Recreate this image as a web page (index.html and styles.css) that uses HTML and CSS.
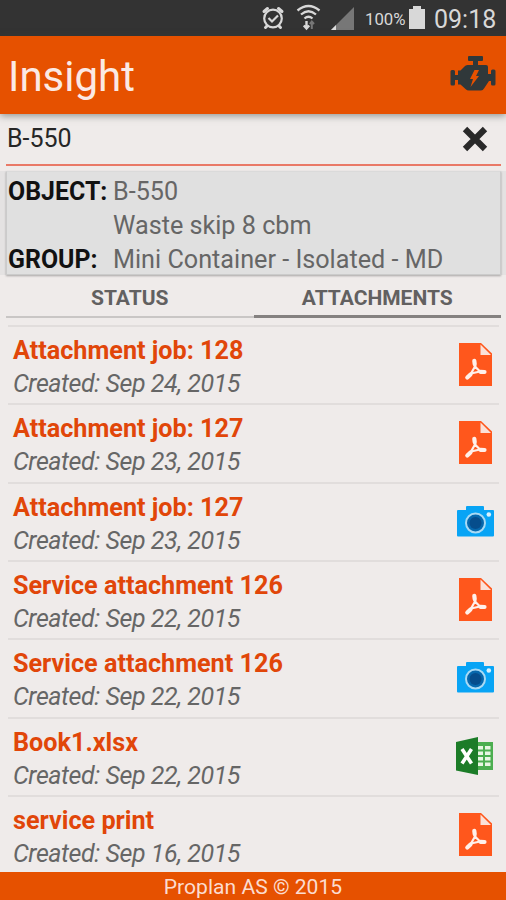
FILE: index.html
```html
<!DOCTYPE html>
<html lang="en">
<head>
<meta charset="utf-8">
<title>Insight</title>
<link rel="stylesheet" href="styles.css">
</head>
<body>
<svg class="defs" width="0" height="0" aria-hidden="true">
  <symbol id="pdf" viewBox="0 0 33 43">
    <path fill="#ff571c" d="M0 0H22L33 10.500V43H0Z"/>
    <path fill="#fbe1d8" d="M21.500 1.500V12H32Z"/>
    <path fill="none" stroke="#fff0ea" stroke-width="2.200" stroke-linejoin="round" d="M15.700 20L15.700 24L12 30.500L21 28.500L16.500 24Z"/>
    <path fill="none" stroke="#fff0ea" stroke-width="4.200" stroke-linecap="round" d="M15.300 17.800L15.700 21M11.500 31.500L8.300 34.500M21.500 28.800L25.500 29"/>
  </symbol>
  <symbol id="camera" viewBox="0 0 37 32">
    <path fill="#08a4f5" d="M1 5H9V2Q9 1 10 1H26Q27 1 27 2V5H36Q37 5 37 6V30.500Q37 31.500 36 31.500H1Q0 31.500 0 30.500V6Q0 5 1 5Z"/>
    <circle cx="18.500" cy="18" r="9.500" fill="#0768ad" stroke="#a9daf4" stroke-width="2"/>
    <circle cx="18.500" cy="18" r="6" fill="#064d8c"/>
    <circle cx="31.800" cy="9.500" r="2.300" fill="#d9f2fd"/>
  </symbol>
  <symbol id="excel" viewBox="0 0 38 38">
    <path fill="#4cae50" d="M21 5H37V33H21Z"/>
    <path stroke="#e8f5e3" stroke-width="3.600" d="M22 10.800H27M29 10.800H34.500M22 16.300H27M29 16.300H34.500M22 21.800H27M29 21.800H34.500M22 27.300H27M29 27.300H34.500"/>
    <path fill="#1c7c28" d="M0 5L22 0V38L0 33.500Z"/>
    <path stroke="#fff" stroke-width="3.600" d="M6 12L15.500 26.500M15.500 12L6 26.500"/>
  </symbol>
</svg>
<div class="screen">
  <div class="status">
    <svg class="status-icons" width="104" height="36" viewBox="0 0 104 36">
      <g fill="none" stroke="#d8d8d8">
        <circle cx="23" cy="18.500" r="8.800" stroke-width="2.200"/>
        <path stroke-width="2.200" d="M18.500 18L22 21.500L28 15.500"/>
        <path stroke-width="3" stroke-linecap="round" d="M14 11.500L17.500 8.500M28.500 8.500L32 11.500M17 26L15.500 27.500M29 26L30.500 27.500"/>
        <path stroke-width="2.300" d="M47.500 10.500Q58.500 1.500 69.500 10.500M51 14.500Q58.500 8 66 14.500M54.500 18.500Q58.500 15 62.500 18.500"/>
        <path stroke-width="2.400" d="M56.500 21V28M53.800 25.500L56.500 28.500L59.200 25.500"/>
        <path stroke="#777" stroke-width="2" d="M61.800 29V22M59.800 24L61.800 21.500L64 24"/>
      </g>
      <path fill="#777" d="M81 30L104 7V30Z"/>
      <path fill="#ddd" d="M81 30L86 25V30Z"/>
    </svg>
    <span class="percent">100%</span>
    <svg class="battery" width="17" height="24" viewBox="0 0 17 24"><path fill="#d8d8d8" d="M0 3H4V0H12V3H16V23H0Z"/></svg>
    <span class="clock">09:18</span>
  </div>
  <header class="bar">
    <h1 class="title">Insight</h1>
    <svg class="engine" width="46" height="36" viewBox="0 0 46 36">
      <path fill="#30383a" d="M19 0H32Q33 0 33 1V4Q33 5 32 5H28V9H36Q38 9 38 11V18H41V15Q41 13.500 42.500 13.500H44Q45.500 13.500 45.500 15V28Q45.500 29.500 44 29.500H42.500Q41 29.500 41 28V25H39L34 32.500Q33 34.500 31 34.500H19Q17 34.500 15.500 33L10.500 28.500H8V24H5V28Q5 29.500 3.500 29.500H2Q.5 29.500 .5 28V15.500Q.5 14 2 14H3.500Q5 14 5 15.500V19H8V14.500H10.500L14.500 10.500Q15.500 9 17.500 9H23V5H19Q18 5 18 4V1Q18 0 19 0Z"/>
      <path fill="#e65100" d="M24.500 14H29L26 20H29L20.500 31L23 23H20Z"/>
    </svg>
  </header>
  <div class="search">
    <span class="query">B-550</span>
    <svg class="clear" width="26" height="26" viewBox="0 0 26 26"><path stroke="#292929" stroke-width="6.200" stroke-linejoin="round" d="M3 3L23 23M23 3L3 23"/></svg>
  </div>
  <div class="band">
    <dl class="card">
      <dt class="label">OBJECT:</dt><dd class="value">B-550</dd>
      <dt class="label"></dt><dd class="value">Waste skip 8 cbm</dd>
      <dt class="label">GROUP:</dt><dd class="value">Mini Container - Isolated - MD</dd>
    </dl>
  </div>
  <nav class="tabs">
    <div class="tab">STATUS</div>
    <div class="tab active">ATTACHMENTS</div>
  </nav>
  <main class="list">
    <div class="row"><div class="text"><div class="name">Attachment job: 128</div><div class="date">Created: Sep 24, 2015</div></div><svg class="pdf"><use href="#pdf"/></svg></div>
    <div class="row"><div class="text"><div class="name">Attachment job: 127</div><div class="date">Created: Sep 23, 2015</div></div><svg class="pdf"><use href="#pdf"/></svg></div>
    <div class="row"><div class="text"><div class="name">Attachment job: 127</div><div class="date">Created: Sep 23, 2015</div></div><svg class="camera"><use href="#camera"/></svg></div>
    <div class="row"><div class="text"><div class="name">Service attachment 126</div><div class="date">Created: Sep 22, 2015</div></div><svg class="pdf"><use href="#pdf"/></svg></div>
    <div class="row"><div class="text"><div class="name">Service attachment 126</div><div class="date">Created: Sep 22, 2015</div></div><svg class="camera"><use href="#camera"/></svg></div>
    <div class="row"><div class="text"><div class="name">Book1.xlsx</div><div class="date">Created: Sep 22, 2015</div></div><svg class="excel"><use href="#excel"/></svg></div>
    <div class="row"><div class="text"><div class="name">service print</div><div class="date">Created: Sep 16, 2015</div></div><svg class="pdf"><use href="#pdf"/></svg></div>
  </main>
  <footer class="footer">Proplan AS © 2015</footer>
</div>
</body>
</html>
```

FILE: styles.css
```css
* { box-sizing: border-box; }
body { margin: 0; font-family: Roboto, "Liberation Sans", sans-serif; background: #efebea; }
.defs { display: block; height: 0; }
.screen { width: 506px; height: 900px; display: flex; flex-direction: column; overflow: hidden; }
.status { height: 36px; flex: none; background: #333; color: #d8d8d8; display: flex; align-items: center; padding-left: 250px; }
.percent { width: 55px; padding: 2px 0 0 11px; font-size: 16.800px; white-space: nowrap; }
.clock { padding: 3px 0 0 8px; font-size: 25px; line-height: 34px; white-space: nowrap; }
.bar { height: 78px; flex: none; background: #e65100; display: flex; justify-content: space-between; padding: 0 10px 0 8px; z-index: 1; box-shadow: 0 2px 7px rgba(60, 70, 60, .5); }
.title { margin: 1px 0 0; color: #fbe9e4; font-weight: 400; font-size: 42px; line-height: 80px; }
.engine { margin-top: 20px; }
.search { height: 52px; flex: none; margin: 0 5px 0 6px; border-bottom: 2px solid #e97967; display: flex; justify-content: space-between; }
.query { font-size: 25px; line-height: 50px; padding-left: 1px; color: #262626; }
.clear { margin: 12px 13px 0 0; }
.band { height: 104px; margin-top: 5px; flex: none; background: #e4e2e2; padding: 0 5px 0 6px; }
.card { margin: 0; height: 104px; background: #e0e0e0; border: 1px solid #cbcbcb; border-top-color: #dadada; box-shadow: 0 1px 2px rgba(0, 0, 0, .3); display: grid; grid-template-columns: 106px 1fr; grid-template-rows: 34px 34px 34px; font-size: 25.200px; line-height: 40px; white-space: nowrap; }
.label { color: #111; font-weight: 700; font-size: 24.900px; padding-left: 1px; }
.value { margin: 0; color: #666; }
.tabs { display: flex; flex: none; height: 43px; margin: 0 5px 0 6px; font-size: 21px; font-weight: 700; line-height: 46px; color: #626060; text-align: center; }
.tab { flex: 1; border-bottom: 2px solid #c9c6c5; }
.active { border-bottom: 3px solid #858180; }
.list { flex: none; height: 547px; margin: 7px 7px 0 8px; }
.row { height: 78.330px; border-top: 2px solid #e1dddc; display: flex; justify-content: space-between; }
.text { padding: 7px 0 0 5px; white-space: nowrap; }
.name { font-size: 25.200px; line-height: 33px; font-weight: 700; color: #e14609; }
.date { font-size: 25px; line-height: 33px; letter-spacing: -.43px; font-style: italic; color: #666; }
.pdf { width: 33px; height: 43px; margin: 16px 7px 0 0; }
.camera { width: 37px; height: 32px; margin: 21px 5px 0 0; }
.excel { width: 38px; height: 38px; margin: 18px 5px 0 0; }
.footer { height: 28px; flex: none; background: #e65100; color: #fbdcd0; text-align: center; font-size: 21.100px; line-height: 30px; }
```
